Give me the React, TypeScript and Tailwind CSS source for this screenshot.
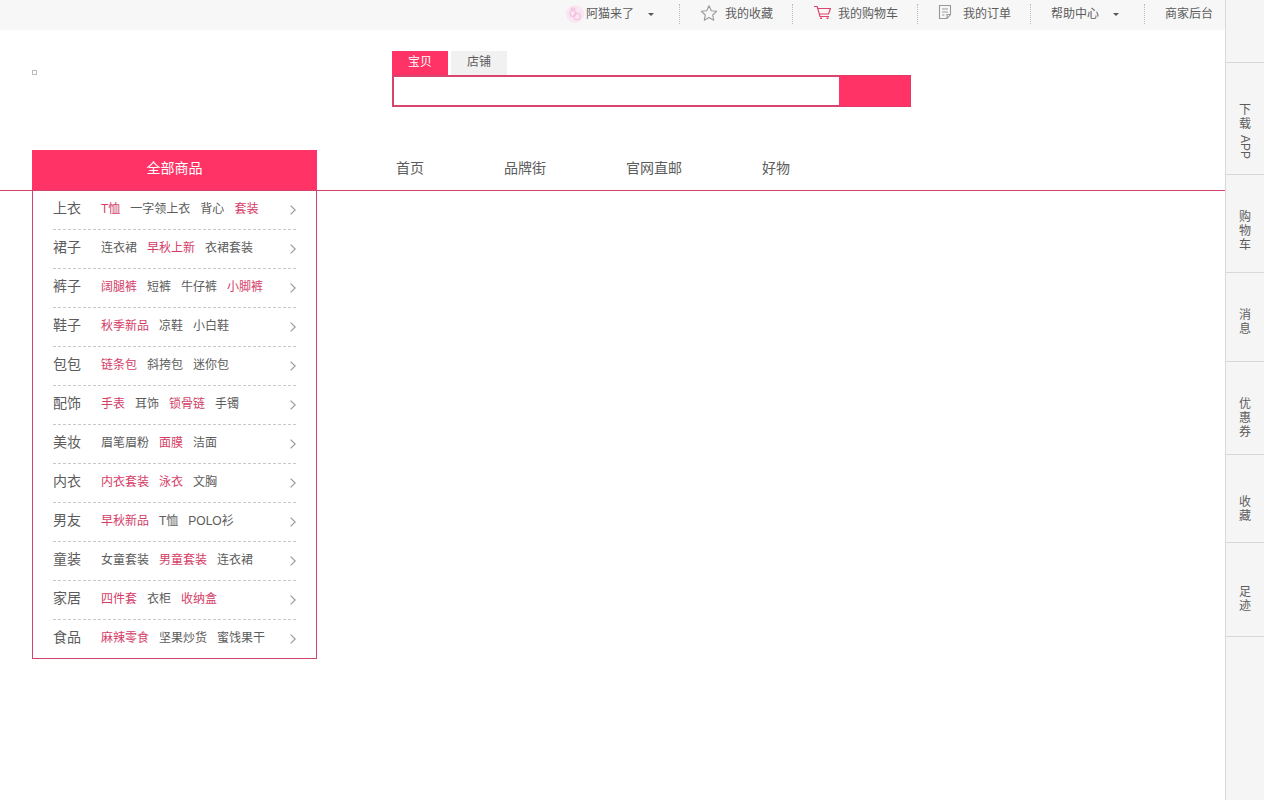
import type { ReactNode } from "react";
import { clsx } from "clsx";

type Link = [label: string, hot?: boolean];

const categories: { name: string; links: Link[] }[] = [
  { name: "上衣", links: [["T恤", true], ["一字领上衣"], ["背心"], ["套装", true]] },
  { name: "裙子", links: [["连衣裙"], ["早秋上新", true], ["衣裙套装"]] },
  { name: "裤子", links: [["阔腿裤", true], ["短裤"], ["牛仔裤"], ["小脚裤", true]] },
  { name: "鞋子", links: [["秋季新品", true], ["凉鞋"], ["小白鞋"]] },
  { name: "包包", links: [["链条包", true], ["斜挎包"], ["迷你包"]] },
  { name: "配饰", links: [["手表", true], ["耳饰"], ["锁骨链", true], ["手镯"]] },
  { name: "美妆", links: [["眉笔眉粉"], ["面膜", true], ["洁面"]] },
  { name: "内衣", links: [["内衣套装", true], ["泳衣", true], ["文胸"]] },
  { name: "男友", links: [["早秋新品", true], ["T恤"], ["POLO衫"]] },
  { name: "童装", links: [["女童套装"], ["男童套装", true], ["连衣裙"]] },
  { name: "家居", links: [["四件套", true], ["衣柜"], ["收纳盒", true]] },
  { name: "食品", links: [["麻辣零食", true], ["坚果炒货"], ["蜜饯果干"]] },
];

const navItems = ["首页", "品牌街", "官网直邮", "好物"];

const sideItems: { chars: string[]; latin?: string; pad: string }[] = [
  { chars: ["下", "载"], latin: "APP", pad: "pt-10 pb-[15px]" },
  { chars: ["购", "物", "车"], pad: "pt-[35px] pb-5" },
  { chars: ["消", "息"], pad: "pt-[35px] pb-[25px]" },
  { chars: ["优", "惠", "券"], pad: "pt-[35px] pb-[15px]" },
  { chars: ["收", "藏"], pad: "pt-10 pb-[19px]" },
  { chars: ["足", "迹"], pad: "pt-[42px] pb-[23px]" },
];

function Caret() {
  return (
    <svg className="ml-3.5 h-[3px] w-1.5" viewBox="0 0 6 3" aria-hidden="true">
      <path d="M0 0h6L3 3z" fill="#555" />
    </svg>
  );
}

function StarIcon() {
  return (
    <svg className="mr-[7px] h-[18px] w-[18px]" viewBox="0 0 18 18" fill="none" stroke="#999" strokeWidth="1.1" strokeLinejoin="round" aria-hidden="true">
      <path d="M9 .8l2.300 4.900 5.300.6-3.900 3.700 1 5.200L9 12.600l-4.700 2.600 1-5.200L1.400 6.300l5.300-.6z" />
    </svg>
  );
}

function CartIcon() {
  return (
    <svg className="mr-[7px] h-[18px] w-[18px]" viewBox="0 0 18 18" fill="none" stroke="#e0446e" strokeWidth="1.2" aria-hidden="true">
      <path d="M1 1.500h3.200L7 11.500h9" />
      <path d="M4.800 3.500h12.700L15.500 9H6.300" />
      <path d="M7 13.200h2M13.500 13.200h2" strokeWidth="1.500" />
    </svg>
  );
}

function OrderIcon() {
  return (
    <svg className="mr-[7px] h-[18px] w-[18px]" viewBox="0 0 18 18" fill="none" stroke="#999" strokeWidth="1.1" aria-hidden="true">
      <path d="M1.500.5h11v9l-3.500 4h-7.500zM12.500 9.500H9v4M4 4h6M4 7h6M4 10h2.500" />
    </svg>
  );
}

function AvatarIcon() {
  return (
    <svg className="mr-0.5 h-[18px] w-[18px]" viewBox="0 0 18 18" fill="none" aria-hidden="true">
      <circle cx="9" cy="9" r="9" fill="#f9e6f2" />
      <g stroke="#f3bfdf" strokeWidth="1.1">
        <circle cx="7" cy="8.500" r="3" />
        <circle cx="11" cy="11.500" r="3.200" />
        <path d="M5 4.300l1-1.300h2l1 1.300-2 1.200z" />
      </g>
    </svg>
  );
}

function TopItem({ children, label, last, wide }: { children?: ReactNode; label: string; last?: boolean; wide?: boolean }) {
  return (
    <li
      className={clsx(
        "flex h-5 items-center pl-5",
        last ? "pr-3" : "border-r border-dotted border-[#bbb]",
        !last && (wide ? "pr-[25px]" : "pr-[19px]"),
      )}
    >
      <a href="#" className="flex items-center whitespace-nowrap">
        {children}
        {label}
        {wide && <Caret />}
      </a>
    </li>
  );
}

export default function App() {
  return (
    <div className="flex min-h-screen bg-white font-['Liberation_Sans','Noto_Sans_CJK_SC',sans-serif] text-xs text-[#5c5c5c]">
      <div className="min-w-0 flex-1">
        <nav className="h-[30px] bg-[#f7f7f7] pt-1">
          <ul className="flex justify-end">
            <TopItem label="阿猫来了" wide><AvatarIcon /></TopItem>
            <TopItem label="我的收藏"><StarIcon /></TopItem>
            <TopItem label="我的购物车"><CartIcon /></TopItem>
            <TopItem label="我的订单"><OrderIcon /></TopItem>
            <TopItem label="帮助中心" wide />
            <TopItem label="商家后台" last />
          </ul>
        </nav>

        <header className="flex h-[120px] items-start px-8">
          <a href="#" aria-label="首页" className="mt-10 block h-[5px] w-[5px] border border-[#bbb]" />
          <form className="mt-[21px] ml-[355px] w-[519px]" onSubmit={(e) => e.preventDefault()}>
            <div className="flex gap-[3px]">
              <button type="button" className="h-6 w-14 bg-[#ff3366] pb-0.5 text-white">宝贝</button>
              <button type="button" className="h-6 w-14 bg-[#f1f1f1] pb-0.5">店铺</button>
            </div>
            <div className="flex h-8">
              <input
                type="text"
                aria-label="搜索"
                className="min-w-0 flex-1 border-2 border-r-0 border-[#d9446c] bg-white px-2 outline-none"
              />
              <button type="submit" aria-label="搜索" className="w-[72px] border border-l-0 border-[#e23a68] bg-[#ff3366]" />
            </div>
          </form>
        </header>

        <nav className="flex border-b border-[#d2446c] pl-8 text-sm">
          <h2 className="flex h-10 w-[285px] items-center justify-center bg-[#ff3366] pb-1 text-white">全部商品</h2>
          <ul className="ml-[79px] flex items-center gap-20 pb-1">
            {navItems.map((item) => (
              <li key={item}><a href="#">{item}</a></li>
            ))}
          </ul>
        </nav>

        <ul className="ml-8 w-[285px] border-x border-b border-[#d2446c] px-5">
          {categories.map(({ name, links }, i) => (
            <li
              key={name}
              className={clsx("flex items-center", i < categories.length - 1 ? "h-[39px] border-b border-dashed border-[#c8c8c8]" : "h-[38px]")}
            >
              <h3 className="mr-5 pb-1 text-sm whitespace-nowrap">{name}</h3>
              <div className="flex flex-1 gap-2.5 pb-0.5 whitespace-nowrap">
                {links.map(([label, hot]) => (
                  <a key={label} href="#" className={hot ? "text-[#d43d67]" : undefined}>{label}</a>
                ))}
              </div>
              <svg className="h-2.5 w-1.5" viewBox="0 0 6 10" fill="none" stroke="#999" strokeWidth="1.2" aria-hidden="true">
                <path d="M.6.6L5.200 5 .6 9.400" />
              </svg>
            </li>
          ))}
        </ul>
      </div>

      <aside className="w-[39px] shrink-0 border-l border-[#d9d9d9] bg-[#f5f5f5] pt-[62px]">
        <ul className="border-t border-[#d9d9d9]">
          {sideItems.map(({ chars, latin, pad }) => (
            <li key={chars.join("")} className={clsx("border-b border-[#d9d9d9]", pad)}>
              <a href="#" className="flex flex-col items-center">
                {chars.map((c) => (
                  <span key={c} className="leading-[14px]">{c}</span>
                ))}
                {latin && <span className="mt-1 leading-[14px] [writing-mode:vertical-rl]">{latin}</span>}
              </a>
            </li>
          ))}
        </ul>
      </aside>
    </div>
  );
}
